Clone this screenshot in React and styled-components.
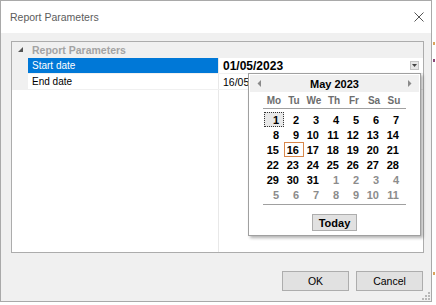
import React from "react";
import styled, { createGlobalStyle } from "styled-components";

const GlobalStyle = createGlobalStyle`
  html, body {
    margin: 0;
    padding: 0;
    background: #ffffff;
  }
  body {
    font-family: "Liberation Sans", Arial, sans-serif;
    color: #000;
  }
`;

const Screen = styled.div`
  display: flex;
  align-items: flex-start;
  width: 436px;
  height: 305px;
  overflow: hidden;
`;

const Window = styled.div`
  position: relative;
  width: 433px;
  height: 302px;
  box-sizing: border-box;
  border: 1px solid #a9a9a9;
  background: #f0f0f0;
  display: flex;
  flex-direction: column;
`;

const TitleBar = styled.div`
  height: 32px;
  background: #ffffff;
  display: flex;
  align-items: center;
  justify-content: space-between;
  padding: 0 6px 0 9px;
`;

const Title = styled.span`
  font-size: 10.5px;
  color: #5c5c5c;
`;

const CloseButton = styled.div`
  width: 12px;
  height: 12px;
  display: flex;
  align-items: center;
  justify-content: center;
`;

const Body = styled.div`
  padding: 8px 7px 0 10px;
`;

const Grid = styled.div`
  position: relative;
  height: 212px;
  box-sizing: border-box;
  border: 1px solid #acacac;
  background: #ffffff;
  display: flex;
  flex-direction: column;
`;

const CategoryRow = styled.div`
  display: flex;
  align-items: center;
  height: 15px;
  background: #f0f0f0;
`;

const Expander = styled.div`
  width: 16px;
  display: flex;
  justify-content: center;
`;

const CategoryLabel = styled.span`
  padding-left: 4px;
  font-size: 10.5px;
  font-weight: bold;
  color: #a3a3a3;
`;

const PropertyRow = styled.div`
  display: grid;
  grid-template-columns: 16px 190px 1px 1fr;
  height: 15px;
  border-top: 1px solid #f0f0f0;
`;

const Margin = styled.div`
  background: #f0f0f0;
`;

const Label = styled.div`
  display: flex;
  align-items: center;
  padding-left: 4px;
  font-size: 10px;
  background: ${(p) => (p.selected ? "#0078d7" : "#ffffff")};
  color: ${(p) => (p.selected ? "#ffffff" : "#000000")};
`;

const Splitter = styled.div`
  background: #e8e8e8;
`;

const Value = styled.div`
  display: flex;
  align-items: center;
  justify-content: space-between;
  padding: 0 4px 0 4px;
  font-size: ${(p) => (p.bold ? "12px" : "10.5px")};
  font-weight: ${(p) => (p.bold ? "bold" : "normal")};
`;

const DropButton = styled.div`
  width: 9px;
  height: 9px;
  box-sizing: border-box;
  border: 1px solid #c4c4c4;
  background: #e6e6e6;
  display: flex;
  align-items: center;
  justify-content: center;
`;

const Filler = styled.div`
  flex: 1;
  display: flex;
  padding-left: 206px;
  border-top: 1px solid #f0f0f0;
`;

const FillerSplit = styled.div`
  width: 1px;
  background: #e8e8e8;
`;

const Popup = styled.div`
  position: absolute;
  left: 236px;
  top: 31px;
  width: 173px;
  height: 163px;
  box-sizing: border-box;
  border: 1px solid #a0a0a0;
  background: #ffffff;
  padding: 1px;
  box-shadow: 2px 2px 3px rgba(0, 0, 0, 0.3);
  display: flex;
  flex-direction: column;
`;

const CalHeader = styled.div`
  height: 17px;
  background: #f0f0f0;
  display: flex;
  align-items: center;
  justify-content: space-between;
  padding: 0 7px;
`;

const MonthTitle = styled.span`
  font-size: 11px;
  font-weight: bold;
  color: #000;
`;

const Section = styled.div`
  margin: ${(p) => p.top || 0}px 0 0 13px;
  width: 143px;
  padding-left: 1px;
  box-sizing: border-box;
  border-bottom: 1px solid #a0a0a0;
  padding-bottom: ${(p) => p.bottom || 0}px;
`;

const CellGrid = styled.div`
  display: grid;
  grid-template-columns: repeat(7, 20px);
  grid-auto-rows: 15px;
`;

const WeekDay = styled.div`
  display: flex;
  align-items: center;
  justify-content: center;
  font-size: 10px;
  font-weight: bold;
  color: #6d6d6d;
`;

const Day = styled.div`
  display: flex;
  align-items: center;
  justify-content: flex-end;
  box-sizing: border-box;
  padding-right: 4px;
  font-size: 11px;
  font-weight: bold;
  color: ${(p) => (p.other ? "#8c8c8c" : "#000000")};
  border: 1px ${(p) => (p.focus ? "dotted #333" : p.today ? "solid #d8864a" : "solid transparent")};
  background: ${(p) => (p.focus ? "#e8e8e8" : "transparent")};
`;

const TodayButton = styled.div`
  align-self: center;
  margin-top: 9px;
  width: 45px;
  height: 17px;
  box-sizing: border-box;
  border: 1px solid #adadad;
  background: #e1e1e1;
  display: flex;
  align-items: center;
  justify-content: center;
  font-size: 11px;
  font-weight: bold;
`;

const Footer = styled.div`
  display: flex;
  justify-content: flex-end;
  gap: 7px;
  padding: 18px 8px 0 0;
`;

const Button = styled.div`
  width: 67px;
  height: 20px;
  box-sizing: border-box;
  border: 1px solid #adadad;
  background: #e1e1e1;
  display: flex;
  align-items: center;
  justify-content: center;
  font-size: 10.5px;
  color: #000;
`;

const Grip = styled.svg`
  position: absolute;
  right: 1px;
  bottom: 1px;
`;

const Backdrop = styled.div`
  display: flex;
  flex-direction: column;
  width: 3px;
  padding: 42px 0 0 1px;
`;

const Mark = styled.div`
  width: 2px;
  height: 3px;
  margin-top: ${(p) => p.gap}px;
  background: ${(p) => p.color};
`;

const weekDays = ["Mo", "Tu", "We", "Th", "Fr", "Sa", "Su"];

const days = [
  ...Array.from({ length: 31 }, (_, i) => ({ n: i + 1 })),
  ...Array.from({ length: 11 }, (_, i) => ({ n: i + 1, other: true })),
];

const Arrow = ({ dir }) => (
  <svg width="4" height="7" viewBox="0 0 4 7">
    <polygon
      points={dir === "left" ? "4,0 4,7 0.5,3.5" : "0,0 0,7 3.5,3.5"}
      fill="#8a8a8a"
    />
  </svg>
);

export default function App() {
  return (
    <>
      <GlobalStyle />
      <Screen>
        <Window>
          <TitleBar>
            <Title>Report Parameters</Title>
            <CloseButton>
              <svg width="10" height="10" viewBox="0 0 10 10">
                <path d="M0.5 0.5 L9.5 9.5 M9.5 0.5 L0.5 9.5" stroke="#555" strokeWidth="1" />
              </svg>
            </CloseButton>
          </TitleBar>
          <Body>
            <Grid>
              <CategoryRow>
                <Expander>
                  <svg width="5" height="5" viewBox="0 0 5 5">
                    <polygon points="5,0 5,5 0,5" fill="#555" />
                  </svg>
                </Expander>
                <CategoryLabel>Report Parameters</CategoryLabel>
              </CategoryRow>
              <PropertyRow>
                <Margin />
                <Label selected>Start date</Label>
                <Splitter />
                <Value bold>
                  01/05/2023
                  <DropButton>
                    <svg width="5" height="3" viewBox="0 0 5 3">
                      <polygon points="0,0 5,0 2.5,3" fill="#444" />
                    </svg>
                  </DropButton>
                </Value>
              </PropertyRow>
              <PropertyRow>
                <Margin />
                <Label>End date</Label>
                <Splitter />
                <Value>16/05/2023</Value>
              </PropertyRow>
              <Filler>
                <FillerSplit />
              </Filler>
              <Popup>
                <CalHeader>
                  <Arrow dir="left" />
                  <MonthTitle>May 2023</MonthTitle>
                  <Arrow dir="right" />
                </CalHeader>
                <Section top={1}>
                  <CellGrid>
                    {weekDays.map((d) => (
                      <WeekDay key={d}>{d}</WeekDay>
                    ))}
                  </CellGrid>
                </Section>
                <Section top={3} bottom={2}>
                  <CellGrid>
                    {days.map((d, i) => (
                      <Day
                        key={i}
                        other={d.other}
                        focus={!d.other && d.n === 1}
                        today={!d.other && d.n === 16}
                      >
                        {d.n}
                      </Day>
                    ))}
                  </CellGrid>
                </Section>
                <TodayButton>Today</TodayButton>
              </Popup>
            </Grid>
          </Body>
          <Footer>
            <Button>OK</Button>
            <Button>Cancel</Button>
          </Footer>
          <Grip width="8" height="8" viewBox="0 0 8 8">
            {[
              [6, 0],
              [6, 3],
              [3, 3],
              [6, 6],
              [3, 6],
              [0, 6],
            ].map(([x, y]) => (
              <rect key={`${x}-${y}`} x={x} y={y} width="2" height="2" fill="#b8b8b8" />
            ))}
          </Grip>
        </Window>
        <Backdrop>
          <Mark gap={0} color="#d9a45e" />
          <Mark gap={14} color="#8c4a78" />
          <Mark gap={210} color="#d9a45e" />
        </Backdrop>
      </Screen>
    </>
  );
}
